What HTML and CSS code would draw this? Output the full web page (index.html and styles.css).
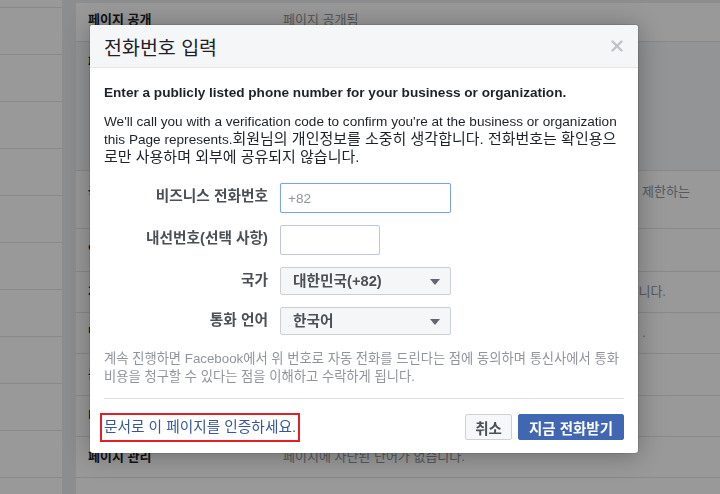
FILE: index.html
```html
<!DOCTYPE html>
<html>
<head>
  <meta charset="utf-8">
  <title>페이지 설정</title>
  <link rel="stylesheet" href="styles.css">
</head>
<body>
  <div class="page">
    <ul class="sidebar">
      <li>일반</li>
      <li>메시지</li>
      <li>페이지 정보 수정</li>
      <li>게시물 기여</li>
      <li>알림</li>
      <li>Messenger 플랫폼</li>
      <li>페이지 역할</li>
      <li>사람 및 기타 페이지</li>
      <li>기본 게시물 공개 대상</li>
      <li>브랜디드 콘텐츠</li>
      <li>Instagram</li>
    </ul>
    <div class="divider"></div>
    <div class="settings">
      <div class="row row-first">
        <span class="row-label">페이지 공개</span>
        <span class="row-value">페이지 공개됨</span>
      </div>
      <div class="row row-open">
        <span class="row-label">페이지 인증</span>
        <span class="row-value"></span>
      </div>
      <div class="row row-double">
        <span class="row-label">국가 제한</span>
        <span class="row-value">페이지가 보일 국가를 지정하거나 특정 국가의 사람이 볼 수 없도록 제한하는<br>설정이 없습니다.</span>
      </div>
      <div class="row row-wide">
        <span class="row-label">연령 제한</span>
        <span class="row-value">모든 사람에게 페이지가 표시됩니다.</span>
      </div>
      <div class="row">
        <span class="row-label">게시물 번역</span>
        <span class="row-value">내 게시물에 번역을 사용할 수 있도록 번역 옵션이 자동으로 표시됩니다.</span>
      </div>
      <div class="row">
        <span class="row-label">댓글 순위</span>
        <span class="row-value">페이지에 게시된 게시물에 관한 댓글을 다른 사람이 볼 수 있습니다 .</span>
      </div>
      <div class="row row-mid">
        <span class="row-label">콘텐츠 배포</span>
        <span class="row-value">Facebook 다운로드가 허용됩니다.</span>
      </div>
      <div class="row">
        <span class="row-label">비속어 필터</span>
        <span class="row-value">해제</span>
      </div>
      <div class="row">
        <span class="row-label">페이지 관리</span>
        <span class="row-value">페이지에 자단된 단어가 없습니다.</span>
      </div>
    </div>
  </div>

  <div class="overlay"></div>

  <div class="dialog">
    <div class="dialog-header">
      <h3 class="dialog-title">전화번호 입력</h3>
      <svg class="dialog-close" width="12" height="12" viewBox="0 0 12 12">
        <path d="M1.5 1.5 L10.5 10.5 M10.5 1.5 L1.5 10.5" stroke="#bec2c9" stroke-width="2.4" stroke-linecap="round"/>
      </svg>
    </div>

    <div class="dialog-body">
      <p class="lead">Enter a publicly listed phone number for your business or organization.</p>
      <p class="intro"><span class="en">We'll call you with a verification code to confirm you're at the business or organization this Page represents.</span>회원님의 개인정보를 소중히 생각합니다. 전화번호는 확인용으로만 사용하며 외부에 공유되지 않습니다.</p>

      <div class="form">
        <div class="form-row">
          <label class="form-label" for="phone">비즈니스 전화번호</label>
          <input class="text-input focused" id="phone" type="text" placeholder="+82">
        </div>
        <div class="form-row">
          <label class="form-label" for="ext">내선번호(선택 사항)</label>
          <input class="text-input short" id="ext" type="text">
        </div>
        <div class="form-row">
          <span class="form-label">국가</span>
          <span class="select">대한민국(+82)</span>
        </div>
        <div class="form-row">
          <span class="form-label">통화 언어</span>
          <span class="select">한국어</span>
        </div>
      </div>

      <p class="notice">계속 진행하면 Facebook에서 위 번호로 자동 전화를 드린다는 점에 동의하며 통신사에서 통화 비용을 청구할 수 있다는 점을 이해하고 수락하게 됩니다.</p>

      <div class="dialog-footer">
        <a class="doc-link" href="#">문서로 이 페이지를 인증하세요.</a>
        <div class="buttons">
          <button class="btn">취소</button>
          <button class="btn btn-primary">지금 전화받기</button>
        </div>
      </div>
    </div>
  </div>
</body>
</html>
```

FILE: styles.css
```css
html, body {
  margin: 0;
  height: 100%;
  overflow: hidden;
}

body {
  font-family: "Liberation Sans", "Noto Sans CJK KR", sans-serif;
  background-color: #ffffff;
  color: #1d2129;
}

/* page behind the dialog */

.page {
  display: flex;
  height: 100%;
}

.sidebar {
  width: 62px;
  margin: -39px 0 0 0;
  padding: 0;
  list-style: none;
  background-color: #ffffff;
  overflow: hidden;
}

.sidebar li {
  height: 46px;
  border-bottom: 1px solid #e5e5e5;
  white-space: nowrap;
  color: transparent;
  font-size: 12px;
}

.divider {
  width: 14px;
  background-color: #e9ebee;
}

.settings {
  flex: 1;
  border-top: 3px solid #e9ebee;
  font-size: 13px;
}

.row {
  display: flex;
  padding: 12px 12px;
  line-height: 16px;
  border-bottom: 1px solid #e5e5e5;
}

.row-first {
  padding: 9px 12px 13px;
}

.row-open {
  height: 104px;
  background-color: #f6f7f9;
}

.row-double {
  padding: 13px 12px 12px;
}

.row-wide {
  padding: 13px 12px;
}

.row-mid {
  padding: 12px 12px 13px;
}

.row-label {
  width: 195px;
  flex-shrink: 0;
  font-weight: bold;
  color: #1d2129;
}

.row-value {
  color: #90949c;
  white-space: nowrap;
}

.overlay {
  position: fixed;
  top: 0;
  left: 0;
  right: 0;
  bottom: 0;
  background-color: rgba(0, 0, 0, 0.4);
}

/* dialog */

.dialog {
  position: absolute;
  top: 25px;
  left: 90px;
  width: 548px;
  background-color: #ffffff;
  border-radius: 3px;
  box-shadow: 0 2px 26px rgba(0, 0, 0, 0.3), 0 0 0 1px rgba(0, 0, 0, 0.1);
  overflow: hidden;
}

.dialog-header {
  display: flex;
  align-items: center;
  justify-content: space-between;
  height: 42px;
  padding: 0 14px;
  background-color: #f5f6f7;
  border-bottom: 1px solid #e5e5e5;
}

.dialog-title {
  margin: 0;
  font-size: 19.5px;
  font-weight: normal;
  color: #1d2129;
}

.dialog-close {
  margin-right: 1px;
}

.dialog-body {
  padding: 16px 14px 13px;
  font-size: 14.7px;
}

.lead {
  margin: 0 0 10px;
  line-height: 18px;
  font-size: 13.6px;
  font-weight: bold;
}

.intro {
  margin: 0 0 17px;
  line-height: 18px;
  font-size: 15px;
}

.en {
  font-size: 13.6px;
  line-height: 1;
}

.form-row {
  display: flex;
  align-items: flex-start;
  gap: 12px;
  margin-bottom: 12px;
}

.form-label {
  width: 164px;
  padding-top: 4px;
  line-height: 18px;
  text-align: right;
  font-weight: bold;
  color: #4b4f56;
}

.text-input {
  box-sizing: border-box;
  width: 171px;
  height: 30px;
  padding: 0 7px;
  border: 1px solid #bdc7d8;
  border-radius: 2px;
  font-family: inherit;
  font-size: 13.6px;
  color: #1d2129;
  outline: none;
}

.text-input::placeholder {
  color: #90949c;
}

.text-input.focused {
  border-color: #7aa3e8;
  box-shadow: 0 0 1px #a9c3f0;
}

.text-input.short {
  width: 100px;
}

.select {
  position: relative;
  box-sizing: border-box;
  width: 171px;
  height: 28px;
  padding: 0 12px;
  line-height: 26px;
  background-color: #f5f6f7;
  border: 1px solid #ccd0d5;
  border-radius: 2px;
  font-weight: bold;
  color: #4b4f56;
}

.select::after {
  content: "";
  position: absolute;
  top: 11px;
  right: 10px;
  border-left: 5px solid transparent;
  border-right: 5px solid transparent;
  border-top: 6px solid #606770;
}

.form-row:last-child {
  margin-bottom: 0;
}

.notice {
  margin: 15px 0 12px;
  line-height: 18px;
  font-size: 13.3px;
  color: #90949c;
}

.dialog-footer {
  display: flex;
  align-items: center;
  justify-content: space-between;
  padding-top: 15px;
  border-top: 1px solid #dddfe2;
}

.doc-link {
  display: inline-block;
  line-height: 21px;
  color: #365899;
  text-decoration: none;
  outline: 2px solid #e41e26;
  outline-offset: 2px;
}

.buttons {
  display: flex;
  gap: 6px;
}

.btn {
  height: 26px;
  padding: 0 9px;
  border: 1px solid #ced0d4;
  border-radius: 2px;
  background-color: #f6f7f9;
  font-family: inherit;
  font-size: 14.5px;
  font-weight: bold;
  color: #4b4f56;
}

.btn-primary {
  padding: 0 10px;
  border-color: #4267b2;
  background-color: #4267b2;
  color: #ffffff;
}
```
